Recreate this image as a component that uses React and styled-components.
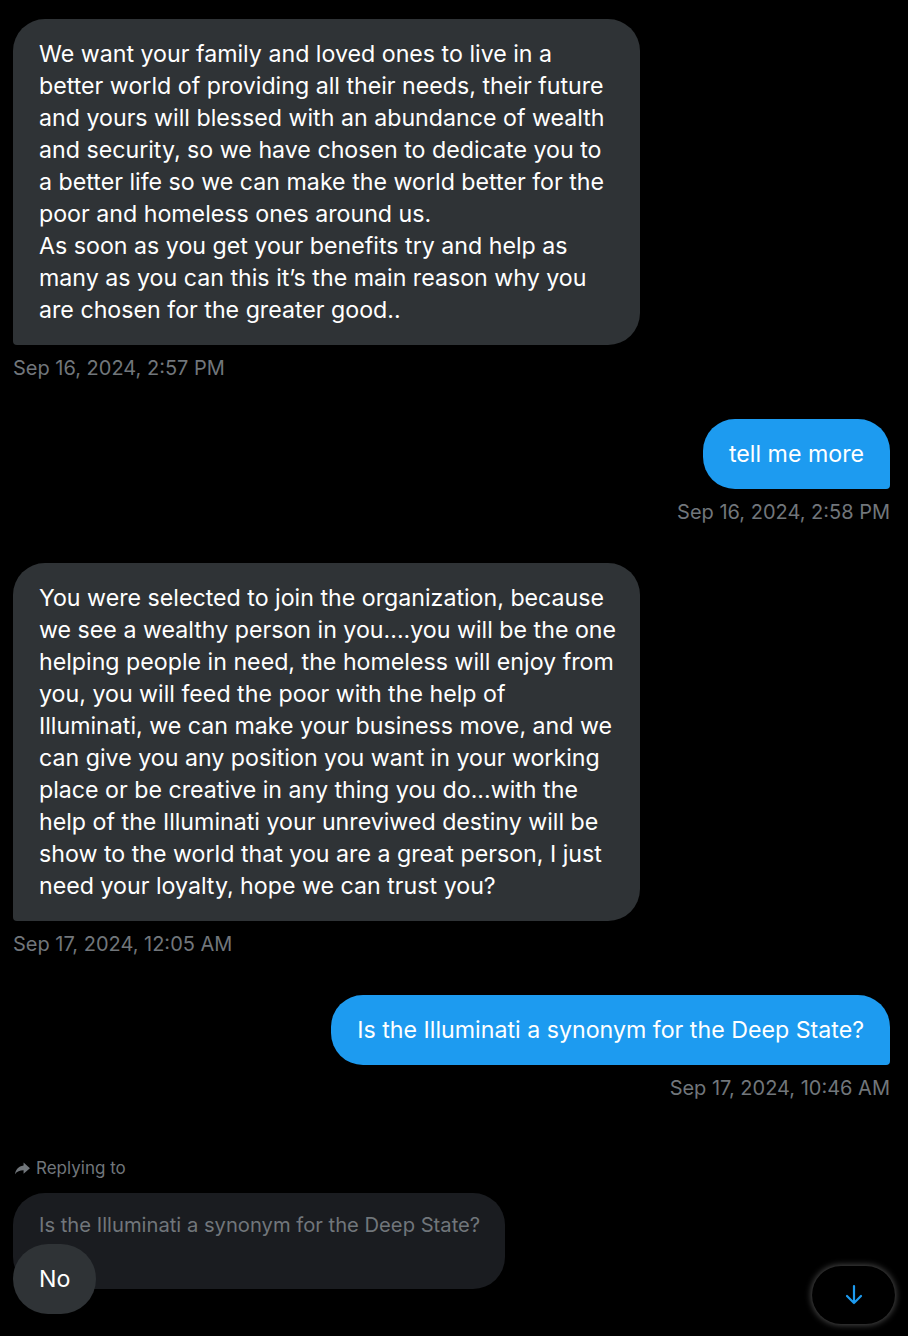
import styled, { createGlobalStyle } from 'styled-components'

const GlobalStyle = createGlobalStyle`
  html, body {
    margin: 0;
    padding: 0;
    background: #000;
  }
  body {
    font-family: Inter, "Noto Sans", "Liberation Sans", sans-serif;
    color: #e7e9ea;
    -webkit-font-smoothing: antialiased;
  }
`

const Page = styled.div`
  position: relative;
  min-height: 1336px;
  box-sizing: border-box;
  padding: 19px 18px 0 13px;
  overflow: hidden;
`

const Group = styled.div`
  display: flex;
  flex-direction: column;
  align-items: ${p => (p.$sent ? 'flex-end' : 'flex-start')};
  margin-bottom: ${p => (p.$last ? '0' : '39px')};
`

const Bubble = styled.div`
  box-sizing: border-box;
  max-width: 627px;
  padding: 19px 26px;
  font-size: 23.2px;
  line-height: 32px;
  color: #fff;
  background: ${p => (p.$sent ? '#1d9bf0' : '#2f3336')};
  border-radius: ${p => (p.$sent ? '32px 32px 4px 32px' : '32px 32px 32px 4px')};
  width: ${p => (p.$sent ? 'auto' : '627px')};
`

const Line = styled.span`
  display: block;
  white-space: nowrap;
`

const Time = styled.div`
  margin-top: 11px;
  font-size: 20px;
  line-height: 24px;
  color: #71767b;
`

const ReplyLabel = styled.div`
  display: flex;
  align-items: center;
  gap: 5px;
  margin-top: 18px;
  padding-left: 1px;
  font-size: 17px;
  line-height: 22px;
  color: #71767b;

  svg {
    width: 17px;
    height: 17px;
    fill: #71767b;
  }
`

const Quote = styled.div`
  box-sizing: border-box;
  width: 492px;
  height: 96px;
  margin-top: 14px;
  padding: 20px 26px;
  background: #1a1c20;
  border-radius: 32px;
  font-size: 20.2px;
  line-height: 24px;
  white-space: nowrap;
  color: #71767b;
`

const ReplyBubble = styled.div`
  align-self: flex-start;
  margin-top: -45px;
  padding: 19px 26px;
  font-size: 23.2px;
  line-height: 32px;
  color: #fff;
  background: #2f3336;
  border-radius: 36px;
`

const ScrollButton = styled.button`
  position: absolute;
  left: 812px;
  top: 1266px;
  width: 83px;
  height: 58px;
  display: flex;
  align-items: center;
  justify-content: center;
  background: #000;
  border: none;
  border-radius: 30px;
  box-shadow: 0 0 6px 1px rgba(217, 217, 217, 0.35);
  cursor: pointer;

  svg {
    width: 24px;
    height: 24px;
  }
`

const messages = [
  {
    sent: false,
    time: 'Sep 16, 2024, 2:57 PM',
    lines: [
      'We want your family and loved ones to live in a',
      'better world of providing all their needs, their future',
      'and yours will blessed with an abundance of wealth',
      'and security, so we have chosen to dedicate you to',
      'a better life so we can make the world better for the',
      'poor and homeless ones around us.',
      'As soon as you get your benefits try and help as',
      'many as you can this it’s the main reason why you',
      'are chosen for the greater good..',
    ],
  },
  { sent: true, time: 'Sep 16, 2024, 2:58 PM', lines: ['tell me more'] },
  {
    sent: false,
    time: 'Sep 17, 2024, 12:05 AM',
    lines: [
      'You were selected to join the organization, because',
      'we see a wealthy person in you....you will be the one',
      'helping people in need, the homeless will enjoy from',
      'you, you will feed the poor with the help of',
      'Illuminati, we can make your business move, and we',
      'can give you any position you want in your working',
      'place or be creative in any thing you do...with the',
      'help of the Illuminati your unreviwed destiny will be',
      'show to the world that you are a great person, I just',
      'need your loyalty, hope we can trust you?',
    ],
  },
  {
    sent: true,
    time: 'Sep 17, 2024, 10:46 AM',
    lines: ['Is the Illuminati a synonym for the Deep State?'],
  },
]

function Message({ sent, time, lines }) {
  return (
    <Group $sent={sent}>
      <Bubble $sent={sent}>
        {lines.map((l, i) => (
          <Line key={i}>{l}</Line>
        ))}
      </Bubble>
      <Time>{time}</Time>
    </Group>
  )
}

export default function App() {
  return (
    <>
      <GlobalStyle />
      <Page>
        {messages.map((m, i) => (
          <Message key={i} {...m} />
        ))}

        <Group $last>
          <ReplyLabel>
            <svg viewBox="0 0 24 24">
              <path d="M13.5 3.5l9 8-9 8v-5c-5.5 0-9.2 1.6-12 5.5 0.9-6 4.4-11 12-12.2V3.5z" />
            </svg>
            Replying to
          </ReplyLabel>
          <Quote>Is the Illuminati a synonym for the Deep State?</Quote>
          <ReplyBubble>No</ReplyBubble>
        </Group>

        <ScrollButton aria-label="Scroll to bottom">
          <svg viewBox="0 0 24 24" fill="none" stroke="#1d9bf0" strokeWidth="2.2" strokeLinecap="round" strokeLinejoin="round">
            <path d="M12 3v17M5 13l7 7 7-7" />
          </svg>
        </ScrollButton>
      </Page>
    </>
  )
}
